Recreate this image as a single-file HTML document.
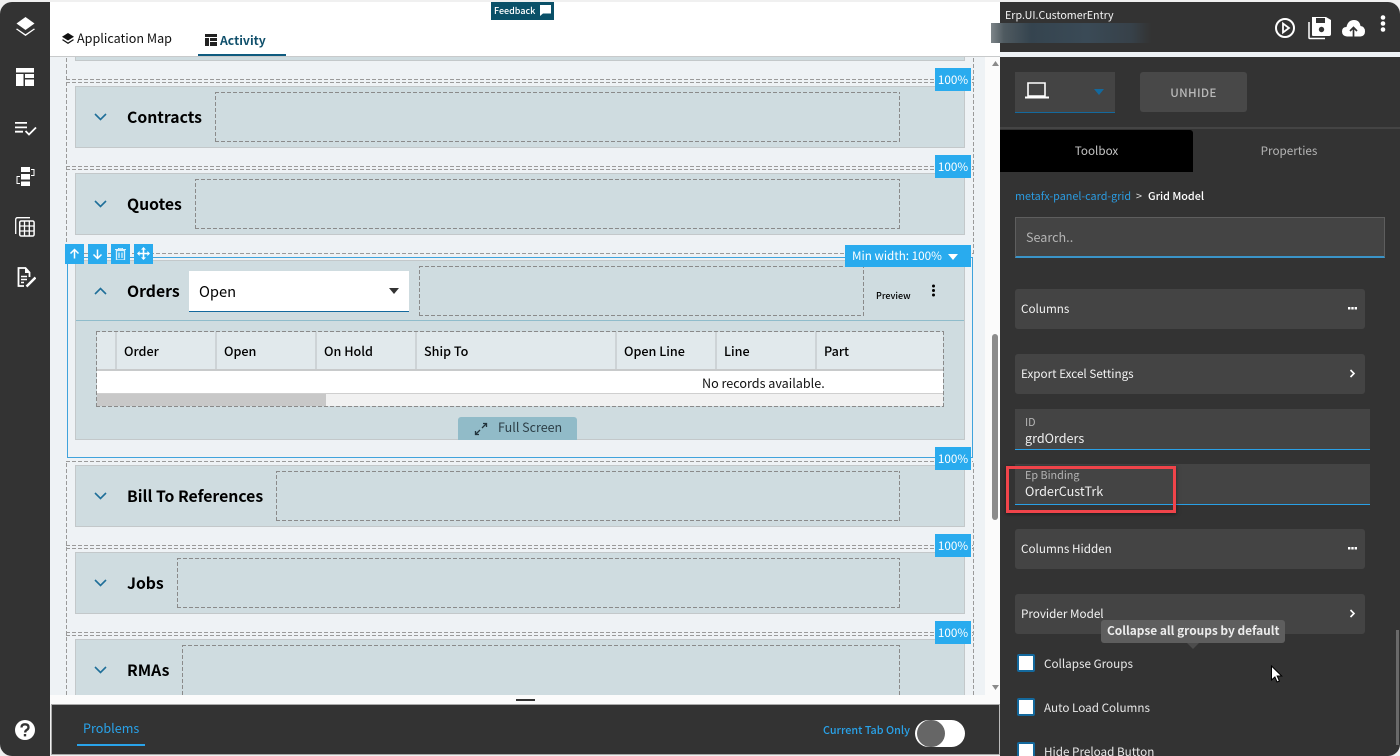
<!DOCTYPE html>
<html><head><meta charset="utf-8"><style>
html,body{margin:0;padding:0;width:1400px;height:756px;overflow:hidden;background:#f0f0f0}
body{position:relative;font-family:"Noto Sans CJK JP","Liberation Sans",sans-serif;color:#000}
.a{position:absolute;box-sizing:border-box;white-space:nowrap}
.t{position:absolute;white-space:nowrap;line-height:20px;height:20px}
.card{position:absolute;left:75px;width:890px;background:#cfdce0;border:1px solid #c3c8ca;box-sizing:border-box}
.dash{position:absolute;box-sizing:border-box;background:repeating-linear-gradient(90deg,#8a8a8a 0 4px,transparent 4px 6px) top/100% 1px no-repeat,repeating-linear-gradient(90deg,#8a8a8a 0 4px,transparent 4px 6px) bottom/100% 1px no-repeat,repeating-linear-gradient(0deg,#8a8a8a 0 4px,transparent 4px 6px) left/1px 100% no-repeat,repeating-linear-gradient(0deg,#8a8a8a 0 4px,transparent 4px 6px) right/1px 100% no-repeat}
.hd{position:absolute;left:66px;width:907px;height:1px;background:repeating-linear-gradient(90deg,#9a9a9a 0 4px,transparent 4px 6px)}
.vd{position:absolute;width:1px;background:repeating-linear-gradient(0deg,#9a9a9a 0 4px,transparent 4px 6px)}
.title{position:absolute;left:127px;font-size:15.750px;font-weight:700;line-height:24px;height:24px;white-space:nowrap}
.pct{position:absolute;left:935px;width:36px;height:23px;background:#29abee;color:#fff;font-size:11.700px;line-height:23px;text-align:center}
.th{position:absolute;top:332px;height:37px;background:#e1e9ec;border-right:2px solid #cdd3d6;box-sizing:border-box;font-size:12.600px;font-weight:500;line-height:37px;padding-left:7px}
.tb{position:absolute;top:244px;width:19px;height:20px;background:#29abee}
.row{position:absolute;left:1015px;width:350px;height:40px;background:#444;border-radius:3px;color:#f2f2f2;font-size:11.700px;line-height:39px;padding-left:6px;box-sizing:border-box}
.cb{position:absolute;left:1017px;width:18px;height:18px;background:#fff;border:2px solid #14699d;border-radius:2px;box-sizing:border-box}
.lb{position:absolute;left:1044px;color:#e8e8e8;font-size:11.700px;line-height:20px;white-space:nowrap}
.ch{position:absolute;left:94px}
svg{position:absolute;display:block}
</style></head><body>

<!-- canvas area -->
<div class="a" style="left:50px;top:57px;width:935px;height:638px;background:#eef2f5"></div>
<div class="a" style="left:985px;top:57px;width:15px;height:648px;background:#fbfbfb"></div>
<div class="a" style="left:50px;top:695px;width:950px;height:10px;background:#fbfbfb"></div>

<!-- outer dashes -->
<div class="vd" style="left:66px;top:57px;height:197px"></div>
<div class="vd" style="left:973px;top:57px;height:197px"></div>
<div class="vd" style="left:66px;top:461px;height:234px"></div>
<div class="vd" style="left:973px;top:461px;height:234px"></div>
<div class="hd" style="top:79px"></div><div class="hd" style="top:82px"></div>
<div class="hd" style="top:166px"></div><div class="hd" style="top:169px"></div>
<div class="hd" style="top:253px"></div>
<div class="hd" style="top:461px"></div>
<div class="hd" style="top:545px"></div><div class="hd" style="top:548px"></div>
<div class="hd" style="top:632px"></div><div class="hd" style="top:635px"></div>

<!-- prior card bottom -->
<div class="card" style="top:50px;height:11px"></div>

<!-- Contracts -->
<div class="card" style="top:86px;height:62px"></div>
<div class="dash" style="left:215px;top:92px;width:685px;height:50px"></div>
<svg class="ch" style="top:113px" width="13" height="8" viewBox="0 0 13 8"><path d="M1 1l5.500 5.500L12 1" fill="none" stroke="#1f6f99" stroke-width="1.600"/></svg>
<div class="title" style="top:105px">Contracts</div>

<!-- Quotes -->
<div class="card" style="top:173px;height:62px"></div>
<div class="dash" style="left:195px;top:179px;width:705px;height:50px"></div>
<svg class="ch" style="top:200px" width="13" height="8" viewBox="0 0 13 8"><path d="M1 1l5.500 5.500L12 1" fill="none" stroke="#1f6f99" stroke-width="1.600"/></svg>
<div class="title" style="top:192px">Quotes</div>

<!-- Orders -->
<div class="a" style="left:67px;top:257px;width:906px;height:201px;border:1px solid #3fa3dc"></div>
<div class="card" style="top:260px;height:180px"></div>
<div class="dash" style="left:419px;top:266px;width:445px;height:50px"></div>
<svg class="ch" style="top:287px" width="13" height="8" viewBox="0 0 13 8"><path d="M1 7l5.500-5.500L12 7" fill="none" stroke="#1f6f99" stroke-width="1.600"/></svg>
<div class="title" style="top:279px">Orders</div>
<div class="a" style="left:189px;top:271px;width:220px;height:41px;background:#fff;border-bottom:1px solid #14699d"></div>
<div class="t" style="left:199px;top:282px;font-size:14.700px">Open</div>
<svg style="left:389px;top:288px" width="10" height="6" viewBox="0 0 10 6"><path d="M0 0h10L5 6z" fill="#333"/></svg>
<div class="t" style="left:876px;top:286px;font-size:9px;font-weight:500">Preview</div>
<svg style="left:931px;top:284px" width="5" height="13" viewBox="0 0 5 13"><circle cx="2.500" cy="2" r="1.500"/><circle cx="2.500" cy="6.500" r="1.500"/><circle cx="2.500" cy="11" r="1.500"/></svg>
<div class="a" style="left:76px;top:320px;width:888px;height:1px;background:#8fbccb"></div>

<div class="a" style="left:97px;top:332px;width:846px;height:74px;background:#f1f1f1"></div>
<div class="th" style="left:97px;width:20px"></div>
<div class="th" style="left:117px;width:100px">Order</div>
<div class="th" style="left:217px;width:100px">Open</div>
<div class="th" style="left:317px;width:100px">On Hold</div>
<div class="th" style="left:417px;width:200px">Ship To</div>
<div class="th" style="left:617px;width:100px">Open Line</div>
<div class="th" style="left:717px;width:100px">Line</div>
<div class="th" style="left:817px;width:126px;border-right:0">Part</div>
<div class="a" style="left:97px;top:369px;width:846px;height:2px;background:#c8cacb"></div>
<div class="a" style="left:97px;top:371px;width:846px;height:23px;background:#fff;border-bottom:1px solid #cfcfcf"></div>
<div class="t" style="left:702px;top:373px;font-size:12.600px;color:#111">No records available.</div>
<div class="a" style="left:97px;top:394px;width:229px;height:12px;background:#c8c8c8"></div>
<div class="dash" style="left:96px;top:331px;width:848px;height:76px"></div>

<div class="a" style="left:458px;top:417px;width:119px;height:23px;background:#91bbc8;border-radius:3px 3px 0 0"></div>
<svg style="left:474px;top:422px" width="14" height="14" viewBox="0 0 14 14"><path d="M8 6l4.500-4.500M9 1.500h3.500V5M6 8l-4.500 4.500M5 12.500H1.500V9" fill="none" stroke="#22343c" stroke-width="1.300"/></svg>
<div class="t" style="left:498px;top:417px;font-size:12.500px;color:#2c3e46">Full Screen</div>

<div class="tb" style="left:65px"></div><div class="tb" style="left:88px"></div><div class="tb" style="left:111px"></div><div class="tb" style="left:134px"></div>
<svg style="left:69px;top:248px" width="11" height="11" viewBox="0 0 11 11"><path d="M5.500 10.500V1.500M1.500 5.500l4-4 4 4" fill="none" stroke="#fff" stroke-width="1.500"/></svg>
<svg style="left:92px;top:249px" width="11" height="11" viewBox="0 0 11 11"><path d="M5.500 .5v9M1.500 5.500l4 4 4-4" fill="none" stroke="#fff" stroke-width="1.500"/></svg>
<svg style="left:115px;top:248px" width="11" height="12" viewBox="0 0 11 12"><path d="M0 1.500h11M3.500 1.500V.3h4v1.200" fill="none" stroke="#d8f0fc" stroke-width="1"/><path d="M1.500 2.500h8V12h-8zM4 4.500V10M7 4.500V10" fill="none" stroke="#d8f0fc" stroke-width="1.300"/></svg>
<svg style="left:137px;top:247px" width="13" height="13" viewBox="0 0 13 13"><path d="M6.500 0L9 2.600H7.300v3.100h3.100V4L13 6.500 10.400 9V7.300H7.300v3.100H9L6.500 13 4 10.400h1.700V7.300H2.600V9L0 6.500 2.600 4v1.700h3.100V2.600H4z" fill="#fff"/></svg>
<div class="a" style="left:845px;top:245px;width:126px;height:22px;background:#29abee;color:#fff;font-size:11.700px;line-height:22px;padding-left:7px">Min width: 100%</div>
<svg style="left:948px;top:254px" width="10" height="6" viewBox="0 0 10 6"><path d="M0 0h10L5 6z" fill="#fff"/></svg>

<!-- Bill To -->
<div class="card" style="top:465px;height:62px"></div>
<div class="dash" style="left:276px;top:471px;width:624px;height:50px"></div>
<svg class="ch" style="top:492px" width="13" height="8" viewBox="0 0 13 8"><path d="M1 1l5.500 5.500L12 1" fill="none" stroke="#1f6f99" stroke-width="1.600"/></svg>
<div class="title" style="top:484px">Bill To References</div>

<!-- Jobs -->
<div class="card" style="top:552px;height:62px"></div>
<div class="dash" style="left:177px;top:558px;width:723px;height:50px"></div>
<svg class="ch" style="top:579px" width="13" height="8" viewBox="0 0 13 8"><path d="M1 1l5.500 5.500L12 1" fill="none" stroke="#1f6f99" stroke-width="1.600"/></svg>
<div class="title" style="top:571px">Jobs</div>

<!-- RMAs -->
<div class="card" style="top:639px;height:56px;border-bottom:0"></div>
<div class="dash" style="left:182px;top:645px;width:718px;height:50px;background-size:100% 1px,0 0,1px 100%,1px 100%"></div>
<svg class="ch" style="top:666px" width="13" height="8" viewBox="0 0 13 8"><path d="M1 1l5.500 5.500L12 1" fill="none" stroke="#1f6f99" stroke-width="1.600"/></svg>
<div class="title" style="top:658px">RMAs</div>

<div class="pct" style="top:68px">100%</div>
<div class="pct" style="top:155px">100%</div>
<div class="pct" style="top:447px">100%</div>
<div class="pct" style="top:534px">100%</div>
<div class="pct" style="top:621px">100%</div>

<!-- main scrollbar -->
<svg style="left:991px;top:59px" width="9" height="8" viewBox="0 0 9 8"><path d="M1 7h7L4.500 2z" fill="#8a8a8a"/></svg>
<svg style="left:991px;top:684px" width="9" height="8" viewBox="0 0 9 8"><path d="M1 1h7L4.500 6z" fill="#8a8a8a"/></svg>
<div class="a" style="left:992px;top:334px;width:6px;height:186px;background:#8c8c8c;border-radius:3px"></div>

<!-- header -->
<div class="a" style="left:50px;top:2px;width:950px;height:55px;background:#fff;border-bottom:1px solid #c8cacb"></div>
<div class="a" style="left:491px;top:2px;width:63px;height:18px;background:#0a5068"></div>
<div class="t" style="left:494px;top:1px;font-size:9px;color:#fff;font-weight:500">Feedback</div>
<svg style="left:540px;top:5px" width="11" height="11" viewBox="0 0 11 11"><path d="M0 0h11v8.500H3L0 11z" fill="#fff"/></svg>
<svg style="left:62px;top:33px" width="12" height="12" viewBox="0 0 12 12"><path d="M6 0l6 3.800L6 7.500 0 3.800z" fill="#111"/><path d="M1 6.300L0 7l6 4 6-4-1-.7L6 9.500z" fill="#111"/></svg>
<div class="t" style="left:77px;top:28px;font-size:12.600px;color:#111">Application Map</div>
<svg style="left:205px;top:34px" width="12" height="12" viewBox="0 0 12 12"><path d="M0 0h12v3H0zM0 4h4v8H0zM5 4h7v3H5zM5 8h7v4H5z" fill="#222"/></svg>
<div class="t" style="left:220px;top:30px;font-size:12.200px;font-weight:700;color:#0f4f6b">Activity</div>
<div class="a" style="left:198px;top:54px;width:88px;height:2px;background:#0f5b7f"></div>

<!-- sidebar -->
<div class="a" style="left:0;top:2px;width:50px;height:754px;background:#333;border-radius:12px 0 0 12px"></div>
<svg style="left:15px;top:16px" width="21" height="21" viewBox="0 0 21 21"><path d="M10.500 1l9 6.500-9 6.500-9-6.500z" fill="#fff"/><path d="M2 12.500l-1 .8 9.500 6.700 9.500-6.700-1-.8-8.500 5.700z" fill="#fff"/></svg>
<svg style="left:16px;top:68px" width="18" height="18" viewBox="0 0 18 18"><path d="M0 0h18v4.500H0zM0 6h7.500v12H0zM9 6h9v4H9zM9 11.500h9V18H9z" fill="#fff"/></svg>
<svg style="left:15px;top:121px" width="22" height="15" viewBox="0 0 22 15"><path d="M0 1h12v1.800H0zM0 5.500h12v1.800H0zM0 9.800h8v1.800H0z" fill="#fff"/><path d="M10.500 10l3.500 3.500L21 6.500" fill="none" stroke="#fff" stroke-width="1.800"/></svg>
<svg style="left:16px;top:167px" width="19" height="20" viewBox="0 0 19 20"><path d="M5 0h9v5H5zM5 7h9v5.500H5zM5 14.500h9V19H5z" fill="#fff"/><path d="M15 2.500h3v6h-3M4 9.500H1v7h3" fill="none" stroke="#fff" stroke-width="1"/></svg>
<svg style="left:15px;top:217px" width="20" height="20" viewBox="0 0 20 20"><path d="M15 .7H2.500Q.7.700.7 2.500V17" fill="none" stroke="#fff" stroke-width="1.300"/><rect x="4.700" y="4" width="14.400" height="15" rx="1.500" fill="none" stroke="#fff" stroke-width="1.500"/><path d="M9.500 4v15M14.300 4v15M4.700 9h14.400M4.700 14h14.400" stroke="#fff" stroke-width="1.300"/></svg>
<svg style="left:17px;top:267px" width="19" height="21" viewBox="0 0 19 21"><path d="M12.500 10V5.500L8.500 1H1.500v18H7" fill="none" stroke="#fff" stroke-width="1.800"/><path d="M8 1v5h5z" fill="#fff"/><path d="M4 9.500h6M4 12.500h6M4 15.500h3" stroke="#fff" stroke-width="1.400"/><path d="M9.500 19.500l9-9" stroke="#fff" stroke-width="2.500"/></svg>
<svg style="left:15px;top:720px" width="20" height="20" viewBox="0 0 20 20"><circle cx="10" cy="10" r="10" fill="#fff"/><path d="M6.500 7.500q0-3.200 3.500-3.200t3.500 3q0 1.700-1.800 2.700-1.500.8-1.500 2.500" fill="none" stroke="#333" stroke-width="2.300"/><rect x="8.800" y="14" width="2.400" height="2.400" fill="#333"/></svg>

<!-- bottom -->
<div class="a" style="left:51px;top:704px;width:949px;height:51px;background:#333;border:1px solid #aaa;border-right:1px solid #bbb"></div>
<div class="a" style="left:516px;top:699px;width:19px;height:2px;background:#333"></div>
<div class="t" style="left:83px;top:718px;font-size:12.600px;color:#29a3ea">Problems</div>
<div class="a" style="left:77px;top:744px;width:68px;height:2px;background:#29a3ea"></div>
<div class="t" style="left:823px;top:720px;font-size:10.800px;font-weight:500;color:#29a3ea">Current Tab Only</div>
<div class="a" style="left:915px;top:720px;width:50px;height:27px;background:#fff;border-radius:14px"></div>
<div class="a" style="left:917px;top:720px;width:28px;height:27px;background:#666;border-radius:14px"></div>

<!-- right panel -->
<div class="a" style="left:1000px;top:57px;width:400px;height:699px;background:#333;border-radius:0 0 12px 0"></div>
<div class="a" style="left:1000px;top:2px;width:400px;height:50px;background:#333;border-radius:0 12px 0 0"></div>
<div class="a" style="left:1000px;top:52px;width:400px;height:5px;background:#eef2f5"></div>
<div class="t" style="left:1005px;top:6px;font-size:10.700px;color:#f4f4f4">Erp.UI.CustomerEntry</div>
<div class="a" style="left:991px;top:23px;width:160px;height:20px;background:linear-gradient(90deg,#7e868a 0,#4f5a60 8%,#35444f 25%,#3a4a56 60%,#374149 88%,#333 100%)"></div>
<svg style="left:1275px;top:18px" width="20" height="20" viewBox="0 0 20 20"><circle cx="10" cy="10" r="9" fill="none" stroke="#fff" stroke-width="2"/><path d="M8 5.500v9l6-4.500z" fill="none" stroke="#fff" stroke-width="1.800"/></svg>
<svg style="left:1308px;top:17px" width="23" height="23" viewBox="0 0 23 23"><path d="M1 5v15.500q0 1 1 1h15" fill="none" stroke="#fff" stroke-width="1.500"/><path d="M4 0h14l5 3v14q0 2-2 2H5q-1 0-1-1z" fill="#fff"/><rect x="8" y="1" width="9" height="5" fill="#333"/><circle cx="13.500" cy="12.500" r="2.700" fill="#333"/></svg>
<svg style="left:1342px;top:19px" width="23" height="18" viewBox="0 0 23 18"><path d="M5 17.500Q0 17 0 12.500T4.500 8Q6 1 12 1q5.500 0 6.500 6 4.500.5 4.500 5.500 0 4.500-4.500 5z" fill="#fff"/><path d="M11.500 17.500V9M8 12l3.500-3.500L15 12" fill="none" stroke="#333" stroke-width="1.700"/></svg>
<svg style="left:1380px;top:15px" width="6" height="17" viewBox="0 0 6 17"><circle cx="3" cy="2.500" r="2.300" fill="#fff"/><circle cx="3" cy="8.500" r="2.300" fill="#fff"/><circle cx="3" cy="14.500" r="2.300" fill="#fff"/></svg>

<div class="a" style="left:1015px;top:72px;width:100px;height:41px;background:#444;border-bottom:1px solid #14699d"></div>
<svg style="left:1025px;top:82px" width="24" height="17" viewBox="0 0 24 17"><path d="M3 1h17v13H3z" fill="none" stroke="#fff" stroke-width="1.600"/><path d="M0 14.500h24V16.500H0z" fill="#fff"/></svg>
<svg style="left:1094px;top:89px" width="10" height="6" viewBox="0 0 10 6"><path d="M0 0h10L5 6z" fill="#14699d"/></svg>
<div class="a" style="left:1140px;top:72px;width:107px;height:40px;background:#484848;border-radius:3px;color:#b9b9b9;font-size:11.700px;line-height:41px;text-align:center;font-weight:500;letter-spacing:.3px">UNHIDE</div>
<div class="a" style="left:1000px;top:127px;width:400px;height:2px;background:#444"></div>
<div class="a" style="left:1000px;top:130px;width:193px;height:42px;background:#000;color:#c4c4c4;font-size:11.700px;line-height:41px;text-align:center;border-radius:0 3px 0 0">Toolbox</div>
<div class="a" style="left:1193px;top:130px;width:192px;height:42px;color:#b4b4b4;font-size:11.700px;line-height:41px;text-align:center">Properties</div>
<div class="t" style="left:1015px;top:186px;font-size:10.800px;color:#2b9be0">metafx-panel-card-grid</div>
<div class="t" style="left:1136px;top:186px;font-size:10.800px;color:#e0e0e0">&gt;</div>
<div class="t" style="left:1148px;top:186px;font-size:10.800px;font-weight:500;color:#fff">Grid Model</div>
<div class="a" style="left:1015px;top:217px;width:370px;height:41px;background:#444;border:1px solid #5e5e5e;border-bottom:2px solid #3a94c8;color:#b4b4b4;font-size:12.600px;line-height:38px;padding-left:10px">Search..</div>
<div class="row" style="top:289px">Columns</div>
<div class="row" style="top:354px">Export Excel Settings</div>
<svg style="left:1348px;top:307px" width="9" height="3" viewBox="0 0 9 3"><path d="M0 0h2.400v2.500H0zM3.300 0h2.400v2.500H3.300zM6.600 0H9v2.500H6.600z" fill="#fff"/></svg>
<svg style="left:1349px;top:369px" width="7" height="9" viewBox="0 0 7 9"><path d="M1.500 1l3.500 3.500L1.500 8" fill="none" stroke="#fff" stroke-width="1.600"/></svg>

<div class="a" style="left:1015px;top:409px;width:355px;height:41px;background:#444;border-bottom:1px solid #29a0e6"></div>
<div class="t" style="left:1025px;top:412px;font-size:10.800px;color:#b4b4b4">ID</div>
<div class="t" style="left:1025px;top:428px;font-size:12.600px;color:#f0f0f0">grdOrders</div>
<div class="a" style="left:1015px;top:464px;width:355px;height:41px;background:#444;border-bottom:1px solid #29a0e6"></div>
<div class="t" style="left:1025px;top:465px;font-size:10.800px;color:#b4b4b4">Ep Binding</div>
<div class="t" style="left:1025px;top:481px;font-size:12.600px;color:#f0f0f0">OrderCustTrk</div>
<div class="a" style="left:1006px;top:466px;width:170px;height:47px;border:3px solid #f0444a;box-shadow:0 1px 4px rgba(0,0,0,.5)"></div>

<div class="row" style="top:529px">Columns Hidden</div>
<svg style="left:1348px;top:547px" width="9" height="3" viewBox="0 0 9 3"><path d="M0 0h2.400v2.500H0zM3.300 0h2.400v2.500H3.300zM6.600 0H9v2.500H6.600z" fill="#fff"/></svg>
<div class="row" style="top:594px">Provider Model</div>
<svg style="left:1349px;top:609px" width="7" height="9" viewBox="0 0 7 9"><path d="M1.500 1l3.500 3.500L1.500 8" fill="none" stroke="#fff" stroke-width="1.600"/></svg>

<div class="a" style="left:1101px;top:620px;width:184px;height:23px;background:#5e5e5e;border-radius:3px;color:#ececec;font-size:11.900px;font-weight:700;line-height:22px;padding-left:6px">Collapse all groups by default</div>
<svg style="left:1187px;top:643px" width="12" height="6" viewBox="0 0 12 6"><path d="M0 0h12L6 6z" fill="#4c4c4c"/></svg>

<div class="cb" style="top:654px"></div><div class="lb" style="top:654px">Collapse Groups</div>
<div class="cb" style="top:698px"></div><div class="lb" style="top:698px">Auto Load Columns</div>
<div class="cb" style="top:742px"></div><div class="lb" style="top:742px">Hide Preload Button</div>

<svg style="left:1270px;top:665px" width="13" height="19" viewBox="0 0 13 19"><path d="M1.500 1v14l3.400-3 2.200 5 2.300-1-2.200-5h4.500z" fill="#fff" stroke="#000" stroke-width="1"/></svg>
<div class="a" style="left:1396px;top:630px;width:3px;height:115px;background:#6a6a6a"></div>
</body></html>
